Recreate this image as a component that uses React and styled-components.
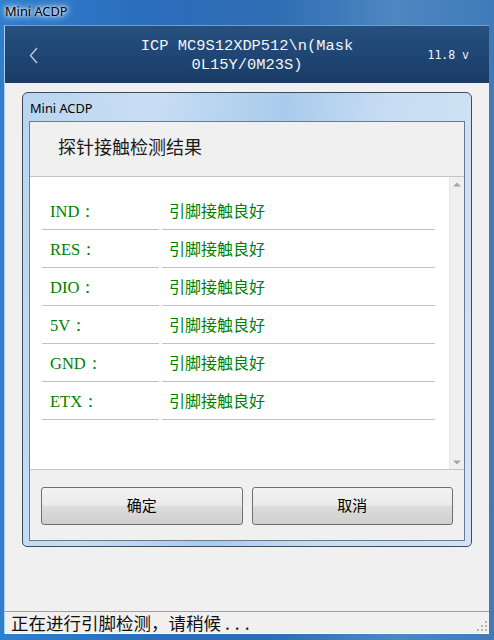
import React from "react";
import styled, { createGlobalStyle } from "styled-components";

const Global = createGlobalStyle`
  html, body { margin: 0; padding: 0; }
  body { width: 494px; height: 640px; overflow: hidden; font-family: "Noto Sans", "Noto Sans CJK SC", sans-serif; }
  * { box-sizing: border-box; }
`;

const WindowFrame = styled.div`
  width: 494px;
  height: 640px;
  display: flex;
  flex-direction: column;
  padding: 0 5px 6px 4px;
  background: linear-gradient(90deg, #2f7fcc 0%, #2a6dbd 30%, #2f6cb3 55%, #4d87c2 80%, #3f7bbb 100%);
`;

const TitleBar = styled.div`
  height: 25px;
  display: flex;
  align-items: center;
  padding-left: 1px;
  padding-bottom: 3px;
  font-family: "Noto Sans", sans-serif;
  font-size: 12.8px;
  color: #000;
  text-shadow: 0 0 6px #fff, 0 0 10px rgba(255,255,255,0.9), 0 0 3px #fff;
`;

const Client = styled.div`
  flex: 1;
  display: flex;
  flex-direction: column;
  background: #f0f0f0;
  border-left: 1px solid #a9cdea;
  border-top: 1px solid #6f9fcf;
`;

const Header = styled.div`
  height: 57px;
  display: grid;
  grid-template-columns: 1fr auto 1fr;
  align-items: center;
  background: linear-gradient(180deg, #27507f 0%, #1f4674 50%, #193c66 100%);
  color: #f2f5f8;
`;

const Back = styled.div`
  padding-left: 24px;
  padding-top: 1px;
  display: flex;
  align-items: center;
`;

const HeaderTitle = styled.div`
  font-family: "Liberation Mono", monospace;
  font-size: 15.4px;
  line-height: 19px;
  text-align: center;
  padding-top: 3px;
`;

const Volt = styled.div`
  justify-self: end;
  padding-right: 20px;
  font-family: "DejaVu Sans Mono", monospace;
  font-size: 11.5px;
  padding-top: 1px;
`;

const Main = styled.div`
  flex: 1;
  padding: 9px 17px 0 17px;
`;

const Dialog = styled.div`
  border: 1px solid #3e4b59;
  border-radius: 6px 6px 5px 5px;
  padding: 0 6px 5px 6px;
  background: linear-gradient(100deg, #b9d5f0 0%, #c9def4 25%, #a9cbec 50%, #c8ddf3 70%, #d2e4f6 100%);
`;

const DialogTitle = styled.div`
  height: 28px;
  display: flex;
  align-items: center;
  padding-left: 1px;
  padding-top: 1px;
  font-family: "Noto Sans", sans-serif;
  font-size: 12.8px;
  color: #000;
`;

const DialogClient = styled.div`
  border: 1px solid #6a7b8e;
  background: #f0f0f0;
  display: flex;
  flex-direction: column;
`;

const Heading = styled.div`
  height: 55px;
  display: flex;
  align-items: center;
  padding: 0 0 6px 28px;
  border-bottom: 1px solid #c4c4c4;
  font-family: "Noto Sans CJK SC", sans-serif;
  font-size: 18px;
  color: #1a1a1a;
`;

const ListArea = styled.div`
  height: 293px;
  display: flex;
  border-bottom: 1px solid #c4c4c4;
`;

const List = styled.div`
  flex: 1;
  background: #fff;
  padding: 15px 0 0 12px;
`;

const Row = styled.div`
  display: grid;
  grid-template-columns: 117px 273px;
  column-gap: 3px;
  height: 38px;
`;

const Cell = styled.div`
  border-bottom: 1px solid #c2c2c2;
  display: flex;
  align-items: center;
  color: #008000;
`;

const Label = styled(Cell)`
  padding: 2px 0 0 8px;
  font-family: "Liberation Serif", serif;
  font-size: 16.5px;
`;

const Value = styled(Cell)`
  padding: 0 0 2px 7px;
  font-family: "Noto Sans CJK SC", sans-serif;
  font-size: 16px;
`;

const Scrollbar = styled.div`
  width: 15px;
  background: #f0f0f0;
  border-left: 1px solid #e6e6e6;
  display: flex;
  flex-direction: column;
  justify-content: space-between;
  align-items: center;
  padding: 5px 0 4px;
`;

const ButtonBar = styled.div`
  display: flex;
  gap: 9px;
  padding: 17px 11px 15px 11px;
`;

const Button = styled.button`
  flex: 1;
  height: 38px;
  border: 1px solid #707070;
  border-radius: 3px;
  background: linear-gradient(180deg, #f2f2f2 0%, #ebebeb 48%, #dddddd 50%, #cfcfcf 100%);
  font-family: "Noto Sans CJK SC", sans-serif;
  font-size: 15px;
  color: #000;
  padding: 0 0 3px;
`;

const StatusBar = styled.div`
  height: 23px;
  border-top: 1px solid #a0a0a0;
  border-bottom: 1px solid #fafafa;
  background: #f2efef;
  display: flex;
  align-items: center;
  padding-left: 6px;
  padding-bottom: 1px;
  font-family: "Noto Sans CJK SC", sans-serif;
  font-size: 17.5px;
  color: #111;
  position: relative;
`;

const Dots = styled.span`
  letter-spacing: 5px;
  padding-left: 4px;
`;

const Grip = styled.svg`
  position: absolute;
  right: 1px;
  bottom: 1px;
`;

const rows = [
  ["IND：", "引脚接触良好"],
  ["RES：", "引脚接触良好"],
  ["DIO：", "引脚接触良好"],
  ["5V：", "引脚接触良好"],
  ["GND：", "引脚接触良好"],
  ["ETX：", "引脚接触良好"],
];

export default function App() {
  return (
    <>
      <Global />
      <WindowFrame>
        <TitleBar>Mini ACDP</TitleBar>
        <Client>
          <Header>
            <Back>
              <svg width="10" height="17" viewBox="0 0 10 17">
                <polyline points="8,1 1.5,8.5 8,16" fill="none" stroke="#c8ced6" strokeWidth="1.3" />
              </svg>
            </Back>
            <HeaderTitle>
              {"ICP MC9S12XDP512\\n(Mask"}
              <br />
              {"0L15Y/0M23S)"}
            </HeaderTitle>
            <Volt>11.8 v</Volt>
          </Header>
          <Main>
            <Dialog>
              <DialogTitle>Mini ACDP</DialogTitle>
              <DialogClient>
                <Heading>探针接触检测结果</Heading>
                <ListArea>
                  <List>
                    {rows.map(([l, v]) => (
                      <Row key={l}>
                        <Label>{l}</Label>
                        <Value>{v}</Value>
                      </Row>
                    ))}
                  </List>
                  <Scrollbar>
                    <svg width="8" height="5" viewBox="0 0 8 5">
                      <polygon points="0,4.5 4,0.5 8,4.5" fill="#a6a6a6" />
                    </svg>
                    <svg width="8" height="5" viewBox="0 0 8 5">
                      <polygon points="0,0.5 4,4.5 8,0.5" fill="#a6a6a6" />
                    </svg>
                  </Scrollbar>
                </ListArea>
                <ButtonBar>
                  <Button>确定</Button>
                  <Button>取消</Button>
                </ButtonBar>
              </DialogClient>
            </Dialog>
          </Main>
          <StatusBar>
            正在进行引脚检测，请稍候<Dots>...</Dots>
            <Grip width="12" height="12" viewBox="0 0 12 12">
              {[[9, 1], [5, 5], [9, 5], [1, 9], [5, 9], [9, 9]].map(([x, y]) => (
                <rect key={`${x}-${y}`} x={x} y={y} width="2" height="2" fill="#b4b4b4" />
              ))}
            </Grip>
          </StatusBar>
        </Client>
      </WindowFrame>
    </>
  );
}
